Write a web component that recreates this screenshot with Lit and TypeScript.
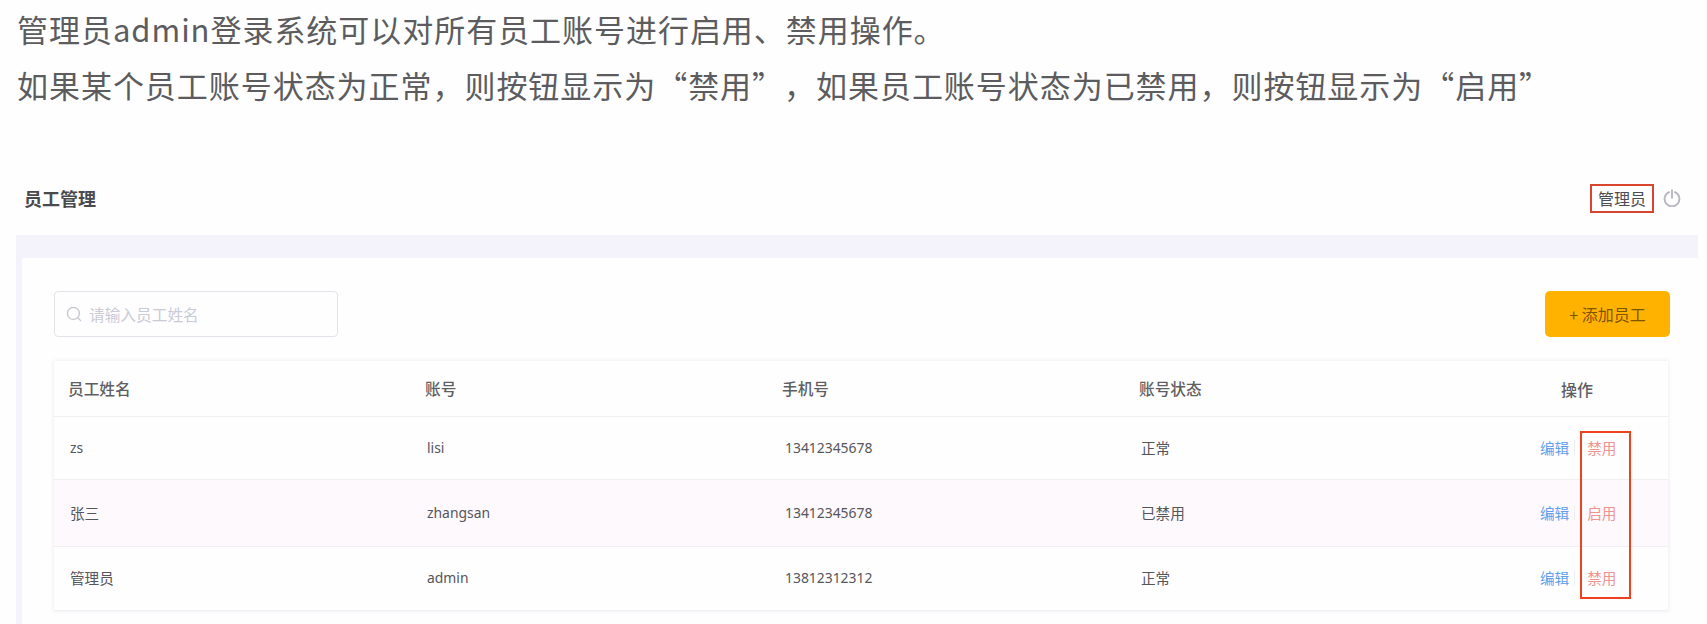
import { LitElement, html, css } from 'lit';
import { customElement } from 'lit/decorators.js';

const columns = ['员工姓名', '账号', '手机号', '账号状态'];

const employees = [
  { name: 'zs', latin: true, account: 'lisi', phone: '13412345678', status: '正常', action: '禁用' },
  { name: '张三', latin: false, account: 'zhangsan', phone: '13412345678', status: '已禁用', action: '启用' },
  { name: '管理员', latin: false, account: 'admin', phone: '13812312312', status: '正常', action: '禁用' },
];

@customElement('app-root')
export class AppRoot extends LitElement {
  static styles = css`
    :host {
      display: block;
      width: 1707px;
      height: 624px;
      overflow: hidden;
      background: #fefefe;
      font-family: "Noto Sans CJK SC", "Noto Sans", sans-serif;
      color: #55555a;
    }
    .notes {
      height: 163px;
      padding: 1px 0 0 17px;
      box-sizing: border-box;
    }
    .notes p {
      margin: 0;
      font-size: 31px;
      letter-spacing: 0.96px;
      line-height: 56px;
      color: #5c5c5f;
      white-space: nowrap;
      text-spacing-trim: space-all;
    }
    .panel {
      margin-left: 16px;
      width: 1682px;
    }
    .topbar {
      height: 72px;
      display: flex;
      align-items: center;
      justify-content: space-between;
      padding: 0 17px 2px 8px;
      box-sizing: border-box;
    }
    .title {
      font-size: 18px;
      font-weight: 700;
      color: #4a4a4e;
    }
    .user {
      display: flex;
      align-items: center;
      gap: 9px;
    }
    .username {
      box-sizing: border-box;
      width: 64px;
      height: 29px;
      border: 2px solid #d9452f;
      font-size: 16px;
      line-height: 25px;
      text-align: center;
      color: #4c4c55;
    }
    .power {
      display: block;
      width: 18px;
      height: 18px;
      color: #b7b7bf;
    }
    .main {
      height: 389px;
      background: #f4f3fb;
      padding: 23px 0 0 6px;
      box-sizing: border-box;
    }
    .card {
      height: 100%;
      background: #fefefe;
      padding: 33px 28px 0 32px;
      box-sizing: border-box;
    }
    .toolbar {
      display: flex;
      justify-content: space-between;
      height: 46px;
    }
    .search {
      display: flex;
      align-items: center;
      gap: 7px;
      width: 284px;
      padding-left: 11px;
      box-sizing: border-box;
      border: 1px solid #e3e3ea;
      border-radius: 4px;
    }
    .search svg {
      width: 16px;
      height: 16px;
      color: #c4c4cc;
      flex: none;
    }
    .search input {
      flex: 1;
      min-width: 0;
      border: none;
      outline: none;
      background: none;
      padding: 0;
      font: inherit;
      font-size: 15.7px;
    }
    .search input::placeholder {
      color: #cbcbd8;
    }
    .add {
      width: 125px;
      border: none;
      border-radius: 5px;
      background: #ffb300;
      color: #7f5400;
      font: inherit;
      font-size: 16px;
    }
    .table {
      position: relative;
      margin-top: 24px;
      width: 1614px;
      background: #fefefe;
      box-shadow: 0 0 4px rgba(90, 90, 130, 0.14);
    }
    .row {
      display: grid;
      grid-template-columns: 357px 357px 357px 357px 1fr;
      align-items: center;
      height: 64px;
      padding: 0 0 2px 14px;
      box-sizing: border-box;
      border-bottom: 1px solid #f1eff4;
      font-size: 14.6px;
      color: #55555c;
    }
    .row:last-of-type {
      border-bottom: none;
      height: 65px;
    }
    .row.first {
      height: 63px;
    }
    .row.alt {
      height: 67px;
      background: #fdf9fd;
    }
    .row.head {
      height: 56px;
      padding-bottom: 0;
      font-size: 15.7px;
      font-weight: 500;
      color: #5f5f63;
    }
    .row.head .op {
      text-align: center;
      padding-right: 10px;
      font-size: 16px;
    }
    .cell {
      padding-left: 2px;
    }
    .num {
      font-family: "Noto Sans", sans-serif;
      font-size: 13.9px;
    }
    .phone {
      padding-left: 3px;
    }
    .actions {
      display: flex;
      align-items: center;
      margin-left: 44px;
    }
    .edit {
      color: #5f9fec;
    }
    .sep {
      width: 1px;
      height: 15px;
      margin: 0 12px 0 5px;
      background: #efeff2;
    }
    .toggle {
      color: #ee9490;
    }
    .mark {
      position: absolute;
      left: 1526px;
      top: 70px;
      width: 51px;
      height: 168px;
      box-sizing: border-box;
      border: 2px solid #f0411f;
    }
  `;

  render() {
    return html`
      <div class="notes">
        <p>管理员admin登录系统可以对所有员工账号进行启用、禁用操作。</p>
        <p>如果某个员工账号状态为正常，则按钮显示为“禁用”，如果员工账号状态为已禁用，则按钮显示为“启用”</p>
      </div>
      <div class="panel">
        <div class="topbar">
          <span class="title">员工管理</span>
          <div class="user">
            <span class="username">管理员</span>
            <svg class="power" viewBox="0 0 18 18" fill="none" stroke="currentColor" stroke-width="1.9" stroke-linecap="round">
              <path d="M6 3.2A7.4 7.4 0 1 0 12 3.2" />
              <path d="M9 1.2V8.8" />
            </svg>
          </div>
        </div>
        <div class="main">
          <div class="card">
            <div class="toolbar">
              <label class="search">
                <svg viewBox="0 0 16 16" fill="none" stroke="currentColor" stroke-width="1.3" stroke-linecap="round">
                  <circle cx="7.4" cy="7.4" r="6" />
                  <path d="M11.8 11.8L14.6 14.6" />
                </svg>
                <input placeholder="请输入员工姓名" />
              </label>
              <button class="add">+ 添加员工</button>
            </div>
            <div class="table">
              <div class="row head">
                ${columns.map((c) => html`<span>${c}</span>`)}
                <span class="op">操作</span>
              </div>
              ${employees.map((e, i) => html`
                <div class="row ${i === 0 ? 'first' : ''} ${i === 1 ? 'alt' : ''}">
                  <span class="cell ${e.latin ? 'num' : ''}">${e.name}</span>
                  <span class="cell num">${e.account}</span>
                  <span class="cell num phone">${e.phone}</span>
                  <span class="cell">${e.status}</span>
                  <span class="actions">
                    <span class="edit">编辑</span>
                    <span class="sep"></span>
                    <span class="toggle">${e.action}</span>
                  </span>
                </div>
              `)}
              <div class="mark"></div>
            </div>
          </div>
        </div>
      </div>
    `;
  }
}
